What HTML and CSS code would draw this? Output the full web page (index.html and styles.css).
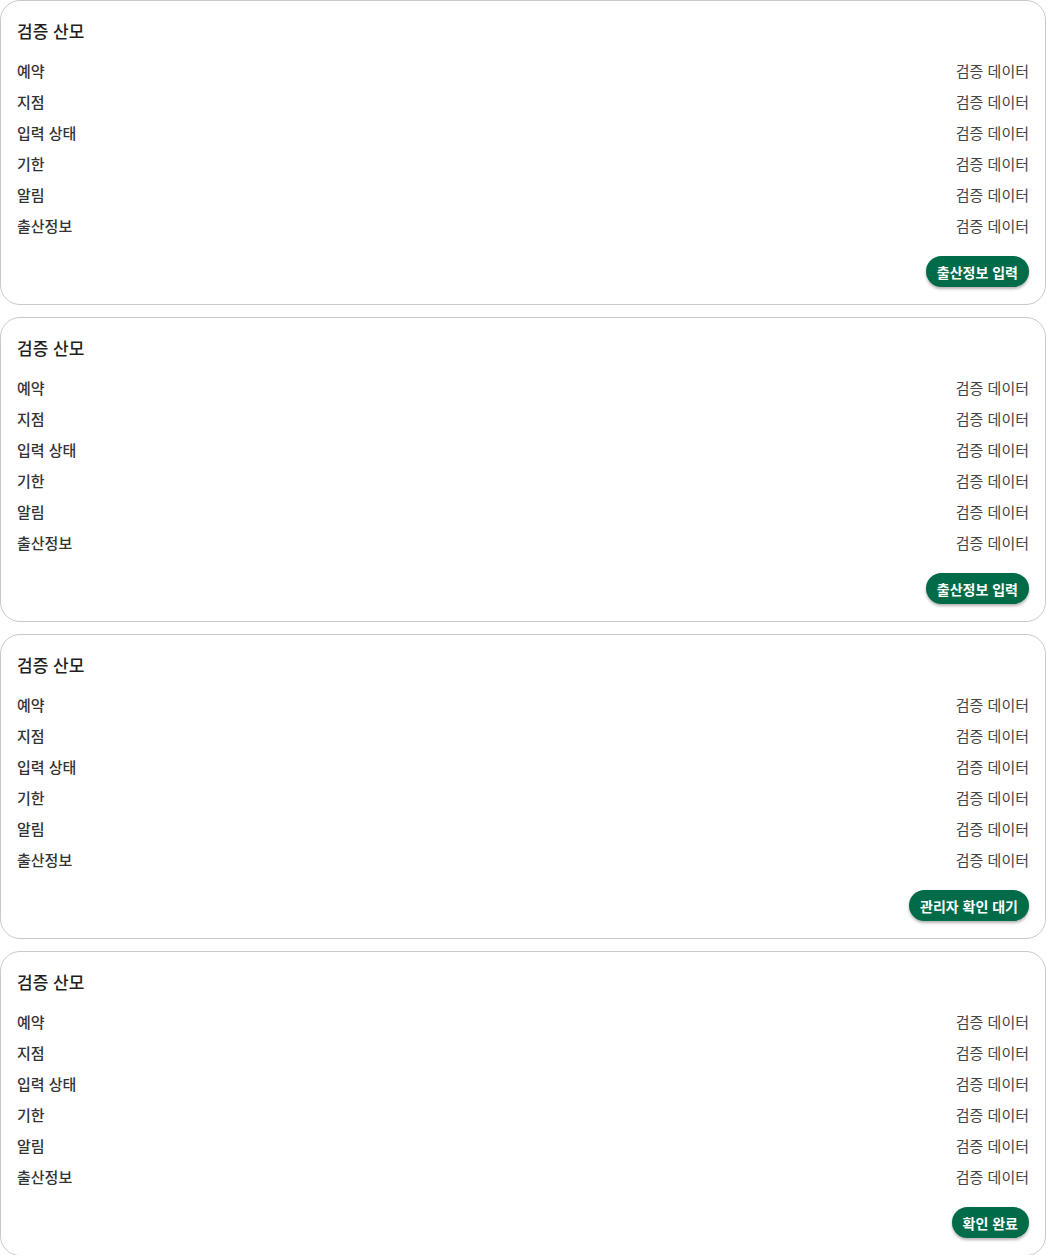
FILE: index.html
```html
<!DOCTYPE html>
<html lang="ko">

<head>
    <meta charset="UTF-8" />
    <meta name="viewport" content="width=device-width, initial-scale=1.0" />
    <title>검증 산모</title>
    <link rel="stylesheet" href="styles.css">
</head>

<body>
    <div class="list">
        <div class="card">
            <div class="card-title">검증 산모</div>
            <div class="row"><span class="label">예약</span><span class="value">검증 데이터</span></div>
            <div class="row"><span class="label">지점</span><span class="value">검증 데이터</span></div>
            <div class="row"><span class="label">입력 상태</span><span class="value">검증 데이터</span></div>
            <div class="row"><span class="label">기한</span><span class="value">검증 데이터</span></div>
            <div class="row"><span class="label">알림</span><span class="value">검증 데이터</span></div>
            <div class="row"><span class="label">출산정보</span><span class="value">검증 데이터</span></div>
            <div class="actions">
                <button class="pill-btn">출산정보 입력</button>
            </div>
        </div>

        <div class="card">
            <div class="card-title">검증 산모</div>
            <div class="row"><span class="label">예약</span><span class="value">검증 데이터</span></div>
            <div class="row"><span class="label">지점</span><span class="value">검증 데이터</span></div>
            <div class="row"><span class="label">입력 상태</span><span class="value">검증 데이터</span></div>
            <div class="row"><span class="label">기한</span><span class="value">검증 데이터</span></div>
            <div class="row"><span class="label">알림</span><span class="value">검증 데이터</span></div>
            <div class="row"><span class="label">출산정보</span><span class="value">검증 데이터</span></div>
            <div class="actions">
                <button class="pill-btn">출산정보 입력</button>
            </div>
        </div>

        <div class="card">
            <div class="card-title">검증 산모</div>
            <div class="row"><span class="label">예약</span><span class="value">검증 데이터</span></div>
            <div class="row"><span class="label">지점</span><span class="value">검증 데이터</span></div>
            <div class="row"><span class="label">입력 상태</span><span class="value">검증 데이터</span></div>
            <div class="row"><span class="label">기한</span><span class="value">검증 데이터</span></div>
            <div class="row"><span class="label">알림</span><span class="value">검증 데이터</span></div>
            <div class="row"><span class="label">출산정보</span><span class="value">검증 데이터</span></div>
            <div class="actions">
                <button class="pill-btn">관리자 확인 대기</button>
            </div>
        </div>

        <div class="card">
            <div class="card-title">검증 산모</div>
            <div class="row"><span class="label">예약</span><span class="value">검증 데이터</span></div>
            <div class="row"><span class="label">지점</span><span class="value">검증 데이터</span></div>
            <div class="row"><span class="label">입력 상태</span><span class="value">검증 데이터</span></div>
            <div class="row"><span class="label">기한</span><span class="value">검증 데이터</span></div>
            <div class="row"><span class="label">알림</span><span class="value">검증 데이터</span></div>
            <div class="row"><span class="label">출산정보</span><span class="value">검증 데이터</span></div>
            <div class="actions">
                <button class="pill-btn">확인 완료</button>
            </div>
        </div>
    </div>
</body>

</html>
```

FILE: styles.css
```css
body {
    margin: 0;
    font-family: "Noto Sans CJK KR", "Noto Sans", sans-serif;
    background-color: #fff;
    color: #222;
}

.list {
    display: flex;
    flex-direction: column;
    gap: 12px;
}

.card {
    border: 1px solid #c8cac8;
    border-radius: 20px;
    padding: 15px 16px 17px 16px;
    background-color: #fff;
}

.card-title {
    font-size: 17px;
    font-weight: 500;
    line-height: 30px;
    margin-bottom: 9px;
    color: #1f1f1f;
}

.row {
    display: flex;
    justify-content: space-between;
    align-items: center;
    height: 31px;
    font-size: 15px;
}

.label {
    font-weight: 500;
    color: #333;
}

.value {
    color: #444;
}

.actions {
    display: flex;
    justify-content: flex-end;
    margin-top: 15px;
}

.pill-btn {
    height: 31px;
    padding: 0 11px;
    border: none;
    border-radius: 16px;
    background-color: #006b48;
    color: #fff;
    font-family: inherit;
    font-size: 14px;
    font-weight: 700;
    box-shadow: 0 2px 3px rgba(0, 0, 0, 0.3);
    cursor: pointer;
}
```
